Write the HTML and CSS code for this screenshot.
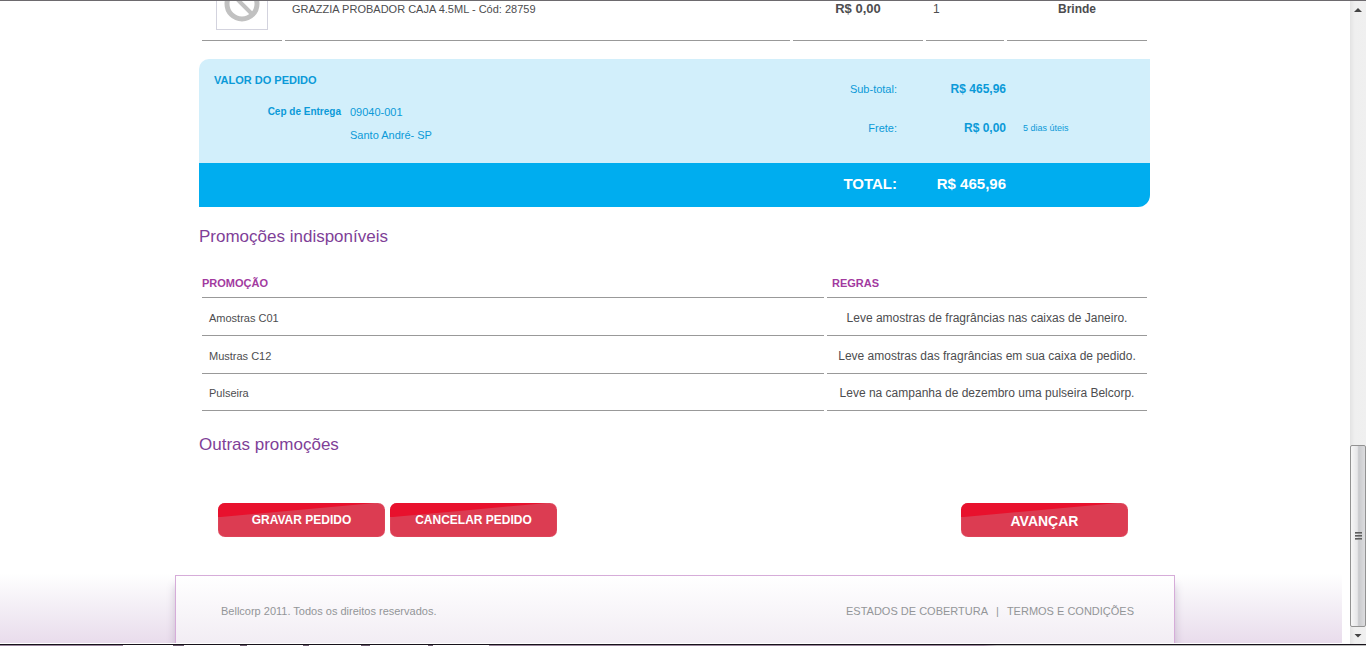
FILE: index.html
```html
<!DOCTYPE html>
<html lang="pt-BR">
<head>
<meta charset="utf-8">
<title>Valor do pedido</title>
<link rel="stylesheet" href="styles.css">
</head>
<body>
<div class="window">
  <div class="page">
    <main class="content">
      <table class="items">
        <colgroup><col class="c-pic"><col><col class="c-price"><col class="c-qty"><col class="c-type"></colgroup>
        <tbody>
          <tr>
            <td><div class="thumb"><svg width="50" height="28" viewBox="0 22 50 28" role="img" aria-label="Sem imagem"><g fill="none" stroke="#c1c1c1"><circle cx="25" cy="25" r="15" stroke-width="5"/><path d="M14 14 35.500 35.500" stroke-width="4"/></g></svg></div></td>
            <td class="name">GRAZZIA PROBADOR CAJA 4.5ML - Cód: 28759</td>
            <td class="price">R$ 0,00</td>
            <td class="qty">1</td>
            <td class="type">Brinde</td>
          </tr>
        </tbody>
      </table>

      <section class="summary">
        <div class="summary-body">
          <div class="delivery">
            <h2>VALOR DO PEDIDO</h2>
            <dl class="address">
              <dt>Cep de Entrega</dt>
              <dd>09040-001</dd>
              <dd>Santo André- SP</dd>
            </dl>
          </div>
          <div class="amounts">
            <span>Sub-total:</span><strong>R$ 465,96</strong><small></small>
            <span>Frete:</span><strong>R$ 0,00</strong><small>5 dias úteis</small>
          </div>
        </div>
        <div class="total">
          <div class="amounts"><strong>TOTAL:</strong><strong>R$ 465,96</strong></div>
        </div>
      </section>

      <h1 class="title">Promoções indisponíveis</h1>
      <table class="promos">
        <colgroup><col><col class="c-rules"></colgroup>
        <thead><tr><th>PROMOÇÃO</th><th class="rules">REGRAS</th></tr></thead>
        <tbody>
          <tr><td>Amostras C01</td><td class="rules">Leve amostras de fragrâncias nas caixas de Janeiro.</td></tr>
          <tr><td>Mustras C12</td><td class="rules">Leve amostras das fragrâncias em sua caixa de pedido.</td></tr>
          <tr><td>Pulseira</td><td class="rules">Leve na campanha de dezembro uma pulseira Belcorp.</td></tr>
        </tbody>
      </table>
      <h1 class="title">Outras promoções</h1>

      <div class="actions">
        <button type="button">GRAVAR PEDIDO</button>
        <button type="button">CANCELAR PEDIDO</button>
        <button type="button" class="next">AVANÇAR</button>
      </div>
    </main>

    <footer class="footer">
      <div class="footer-box">
        <p>Bellcorp 2011. Todos os direitos reservados.</p>
        <nav><a href="#">ESTADOS DE COBERTURA</a><span>|</span><a href="#">TERMOS E CONDIÇÕES</a></nav>
      </div>
    </footer>
  </div>

  <div class="scrollbar" aria-hidden="true">
    <svg class="arrow" width="16" height="18" viewBox="0 0 16 18"><path d="M8 7 12 11H4z" fill="#444"/></svg>
    <div class="track"><div class="handle"><i></i><i></i><i></i></div></div>
    <svg class="arrow" width="16" height="17" viewBox="0 0 16 17"><path d="M4.500 7H11.500L8 10.500z" fill="#444"/></svg>
  </div>
</div>
<div class="edge"></div>
</body>
</html>
```
FILE: styles.css
```css
* { box-sizing: border-box; }

body {
  margin: 0;
  min-height: 100vh;
  display: flex;
  flex-direction: column;
  border-top: 1px solid #6d6a6e;
  background: #fff;
  color: #4d4d4f;
  font: 12px/16px "Liberation Sans", Arial, sans-serif;
}

.window { flex: 1; display: flex; }
.page { flex: 1; min-width: 0; display: flex; flex-direction: column; }
.content { width: 100%; max-width: 952px; margin: 0 auto; padding-right: 1px; }

table { width: 100%; border-spacing: 3px 0; table-layout: fixed; }
td, th { border-bottom: 1px solid #999; }

.items td { height: 40px; padding: 0; vertical-align: top; }
.c-pic { width: 80px; }
.c-price { width: 130px; }
.c-qty { width: 78px; }
.c-type { width: 140px; }
.thumb { width: 52px; margin: 0 auto; border: 1px solid #d3d3de; border-top: 0; }
.thumb svg { display: block; }
.items .name { padding-left: 7px; font-size: 11px; }
.items .qty { padding-left: 7px; }
.price, .type { font-weight: bold; text-align: center; }
.price { font-size: 13px; }

.summary { margin-top: 18px; color: #0b9ad8; }
.summary-body {
  display: flex;
  justify-content: space-between;
  height: 104px;
  background: #d2effb;
  border-top-left-radius: 10px;
  font-size: 11px;
}
.delivery { padding: 13px 0 0 15px; }
.delivery h2 { margin: 0; font-size: 11px; }
.address { display: grid; grid-template-columns: 127px auto; gap: 7px 9px; margin: 16px 0 0; }
.address dt { font-size: 10px; font-weight: bold; text-align: right; }
.address dd { margin: 0; grid-column: 2; }
.amounts {
  display: grid;
  grid-template-columns: 100px 109px 144px;
  row-gap: 23px;
  align-content: start;
  text-align: right;
}
.summary-body .amounts { padding-top: 22px; }
.summary-body strong { font-size: 12px; }
.amounts small { padding-left: 17px; font-size: 9px; text-align: left; }
.total {
  display: flex;
  justify-content: flex-end;
  height: 44px;
  padding-top: 13px;
  background: #00adef;
  border-bottom-right-radius: 12px;
  color: #fff;
  font-size: 15px;
}

.title { margin: 20px 0 0; color: #7f3f98; font-size: 17px; font-weight: normal; line-height: 20px; }

.promos { margin-top: 28px; }
.c-rules { width: 320px; }
.promos th { height: 23px; padding: 0 0 6px; color: #a23a9f; font-size: 11px; text-align: left; }
.promos th.rules { padding-left: 5px; }
.promos td { height: 38px; padding: 2px 7px 0; font-size: 11px; }
.promos tr:last-child td { height: 37px; }
.promos td.rules { font-size: 12px; text-align: center; }
.promos + .title { margin-top: 24px; }

.actions { display: flex; gap: 5px; margin-top: 48px; padding: 0 22px 0 19px; }
button {
  position: relative;
  z-index: 0;
  width: 167px;
  height: 34px;
  padding: 0;
  overflow: hidden;
  border: 0;
  border-radius: 7px;
  background: #dc3c52;
  box-shadow: inset 0 0 1px #e8909d;
  color: #fff;
  font: bold 12px/16px "Liberation Sans", Arial, sans-serif;
}
button::before {
  content: "";
  position: absolute;
  z-index: -1;
  inset: 0 6% 58% 0;
  background: #e8112d;
  clip-path: polygon(0 0, 100% 0, 0 100%);
}
.next { margin-left: auto; padding-top: 2px; font-size: 14px; }

.footer {
  flex: 1;
  display: flex;
  margin: 30px 8px 1px 0;
  padding: 8px 0 0 8px;
  overflow: hidden;
  background: linear-gradient(#fff 8%, #f5f1f7 45%, #e9dcec);
}
.footer-box {
  width: 100%;
  max-width: 1000px;
  margin: 0 auto;
  padding: 27px 40px 0 45px;
  display: flex;
  justify-content: space-between;
  border: 1px solid #d6acd9;
  border-bottom: 0;
  background: linear-gradient(#fff, #f2edf4);
  box-shadow: 0 10px 8px rgba(110, 90, 130, .3);
  color: #939598;
  font-size: 11px;
}
.footer p { margin: 0; }
.footer nav { display: flex; gap: 8px; align-self: flex-start; }
.footer a { color: inherit; text-decoration: none; }

.scrollbar {
  width: 16px;
  display: flex;
  flex-direction: column;
  background: linear-gradient(90deg, #e3e3e3, #efefef 30%, #f0f0f0);
}
.arrow { display: block; }
.track { flex: 1; display: flex; flex-direction: column; justify-content: flex-end; }
.handle {
  height: 30%;
  display: flex;
  flex-direction: column;
  align-items: center;
  justify-content: center;
  gap: 1px;
  border: 1px solid #929292;
  border-radius: 2px;
  background: linear-gradient(90deg, #f7f7f7, #e6e6e8 45%, #c9cacd 55%, #dcdcde);
}
.handle i { width: 7px; height: 2px; background: linear-gradient(#444, #aaa); }

.edge {
  height: 2px;
  border-top: 1px solid #17121a;
  background: linear-gradient(90deg, #9b879d 9%, #fff 9% 12.700%, #6d5c70 12.700% 13.500%, #fff 13.500% 17.600%, #6d5c70 17.600% 18.100%, #fff 18.100% 22.200%, #6d5c70 22.200% 22.600%, #fff 22.600% 26.400%, #6d5c70 26.400% 27.100%, #fff 27.100% 31.300%, #6d5c70 31.300% 31.700%, #fff 31.700% 35.800%, #9b879d 35.800% 72%, #bbb 73%);
}
```
